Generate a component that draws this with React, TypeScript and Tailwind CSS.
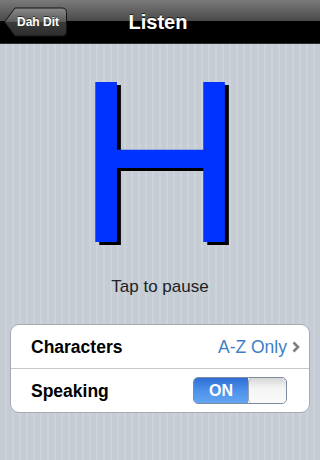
import React from 'react';

const font = { fontFamily: '"Liberation Sans", Arial, sans-serif' };

function BackButton() {
  return (
    <div className="relative flex h-[30px] w-[63px] items-center pl-[13px]">
      <svg className="absolute left-0 top-0" width="63" height="30" viewBox="0 0 63 30">
        <defs>
          <linearGradient id="bb" x1="0" y1="0" x2="0" y2="1">
            <stop offset="0" stopColor="#8a8a8a" />
            <stop offset="0.5" stopColor="#5a5a5a" />
            <stop offset="0.5" stopColor="#3a3a3a" />
            <stop offset="1" stopColor="#2e2e2e" />
          </linearGradient>
        </defs>
        <path
          d="M0.5 15 L11 1 H58 Q62.5 1 62.5 5.5 V24.5 Q62.5 29 58 29 H11 Z"
          fill="url(#bb)"
          stroke="#141414"
          strokeWidth="1"
        />
      </svg>
      <span className="relative text-[12px] font-bold leading-[14px] text-white" style={{ ...font, textShadow: '0 -1px 0 rgba(0,0,0,0.6)' }}>
        Dah Dit
      </span>
    </div>
  );
}

function Switch() {
  return (
    <div className="flex h-[27px] w-[94px] overflow-hidden rounded-[5px] border border-[#7d8ba0]">
      <div className="flex w-[54px] items-center justify-center bg-[linear-gradient(#2f6ed6,#4d91ea_50%,#64a4f2)] text-[16px] font-bold leading-[18px] text-white" style={font}>
        ON
      </div>
      <div className="flex-1 rounded-[4px] border-l border-[#9aa2ad] bg-[linear-gradient(#d6d6d6,#f4f4f4_40%,#fafafa)]" />
    </div>
  );
}

export default function App() {
  return (
    <div className="flex h-[460px] w-[320px] flex-col overflow-hidden" style={font}>
      <div className="flex h-[44px] items-center border-b border-[#2a2a2a] bg-[linear-gradient(#7a7a7a,#4b4b4b_48%,#000_50%,#000)] px-[4px]">
        <BackButton />
        <div className="flex-1 pr-[67px] text-center text-[20px] font-bold leading-[24px] text-white" style={{ textShadow: '0 -1px 0 rgba(0,0,0,0.7)' }}>
          Listen
        </div>
      </div>
      <div className="flex flex-1 flex-col items-center bg-[repeating-linear-gradient(90deg,#c5ccd4_0px,#c5ccd4_5px,#ccd3da_5px,#ccd3da_7px)]">
        <div
          className="mt-[18px] h-[200px] text-[232px] leading-[200px] text-[#0033ff]"
          style={{ ...font, textShadow: '4px 3px 0 #000' }}
        >
          H
        </div>
        <div className="mt-[15px] text-[17px] leading-[20px] text-[#222]" style={font}>
          Tap to pause
        </div>
        <div className="mt-[27px] w-[300px] rounded-[9px] border border-[#a7abb0] bg-white">
          <div className="flex h-[44px] items-center border-b border-[#c8c8c8] pl-[20px] pr-[9px]">
            <span className="flex-1 text-[17.5px] font-bold leading-[20px] text-black">Characters</span>
            <span className="text-[17.5px] leading-[20px] text-[#3d7ec6]">A-Z Only</span>
            <svg className="ml-[5px]" width="8" height="12" viewBox="0 0 8 12">
              <path d="M1.5 1.5 L6 6 L1.5 10.5" fill="none" stroke="#7f7f7f" strokeWidth="2.6" />
            </svg>
          </div>
          <div className="flex h-[43px] items-center pl-[20px] pr-[22px]">
            <span className="flex-1 text-[17.5px] font-bold leading-[20px] text-black">Speaking</span>
            <Switch />
          </div>
        </div>
      </div>
    </div>
  );
}
